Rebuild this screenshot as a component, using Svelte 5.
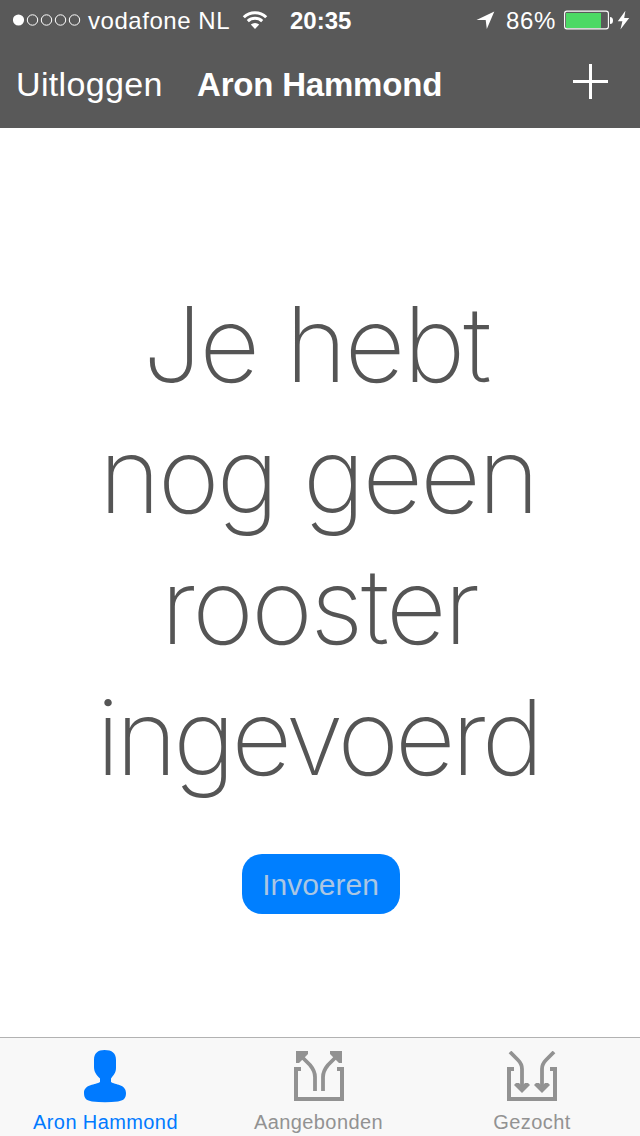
<script>
  const lines = [
    { text: 'Je hebt', spacing: -2.1, shift: -8 },
    { text: 'nog geen', spacing: -2.7, shift: -4 },
    { text: 'rooster', spacing: -2.5, shift: -2 },
    { text: 'ingevoerd', spacing: -4, shift: -4 }
  ];
  const dots = [1, 2, 3, 4];
</script>

<div class="screen">
  <header>
    <div class="status">
      <svg class="signal" width="68" height="12" viewBox="0 0 68 12">
        <circle cx="5.5" cy="6" r="5.6" fill="#fff" />
        {#each dots as d}
          <circle cx={5.5 + d * 14} cy="6" r="5.2" fill="none" stroke="#fff" stroke-width="1" />
        {/each}
      </svg>
      <span class="carrier">vodafone NL</span>
      <svg class="wifi" width="26" height="20" viewBox="0 0 26 20">
        <g fill="none" stroke="#fff" stroke-width="3">
          <path d="M1.8 7.2A16 16 0 0 1 24.2 7.2" />
          <path d="M5.8 11.2A10.5 10.5 0 0 1 20.2 11.2" />
        </g>
        <path d="M8.8 14.6A6 6 0 0 1 17.2 14.6L13 19Z" fill="#fff" />
      </svg>
      <span class="time">20:35</span>
      <svg class="location" width="19" height="19" viewBox="0 0 19 19">
        <path d="M18.3 .5 10.8 18 9.7 9.1 .5 8.9Z" fill="#fff" />
      </svg>
      <span class="percent">86%</span>
      <svg class="battery" width="50" height="20" viewBox="0 0 50 20">
        <rect x=".6" y="1.1" width="43.8" height="17.8" rx="2.3" fill="none" stroke="#fff" stroke-width="1.1" />
        <rect x="2" y="3" width="35" height="15" fill="#4cd964" />
        <path d="M46 7Q49 7 49 10.5T46 14Z" fill="#fff" />
      </svg>
      <svg class="bolt" width="13" height="20" viewBox="0 0 13 20">
        <path d="M8.4 .7 .8 11.2H5.4L3.4 19.4 12.2 8H7.2Z" fill="#fff" />
      </svg>
    </div>
    <nav>
      <span class="logout">Uitloggen</span>
      <h1>Aron Hammond</h1>
      <svg class="plus" width="35" height="35" viewBox="0 0 35 35">
        <path d="M17.5 0V35M0 17.5H35" stroke="#fff" stroke-width="3" />
      </svg>
    </nav>
  </header>

  <main>
    <p class="message">
      {#each lines as line}
        <span style="letter-spacing: {line.spacing}px; margin-left: {line.shift}px">{line.text}</span>
      {/each}
    </p>
    <button>Invoeren</button>
  </main>

  <footer>
    <div class="tab active">
      <svg width="42" height="53" viewBox="0 0 42 53">
        <path d="M20.5 0C28 0 32 3 32 10V18C32 23 29.5 25 27 28.5V32C31 35 42 34 42 43C42 49 39 50.5 34 51.5Q21 53 8 51.5C3 50.5 0 49 0 43C0 34 12 35 16 32V28.5C12.5 25 10 22 10 17V10C10 3 14 0 20.5 0Z" fill="#007aff" />
      </svg>
      <span>Aron Hammond</span>
    </div>
    <div class="tab">
      <svg width="50" height="51" viewBox="0 0 50 51">
        <g fill="none" stroke="#929292">
          <path d="M7 18H2V48H48V18H43" stroke-width="4" />
          <path d="M7 5 16 14Q21 20 21 26V40M43 5 34 14Q29 20 29 26V40" stroke-width="3.8" />
        </g>
        <path d="M2 0H14V3L5 12H2ZM48 0H36V3L45 12H48Z" fill="#929292" />
      </svg>
      <span>Aangebonden</span>
    </div>
    <div class="tab">
      <svg width="50" height="51" viewBox="0 0 50 51">
        <g fill="none" stroke="#929292">
          <path d="M7 18H2V48H48V18H43" stroke-width="4" />
          <path d="M3 1 11 9Q15 13 15 18V38M47 1 39 9Q35 13 35 18V38" stroke-width="3.8" />
        </g>
        <path d="M7 34 9 32H12L15 35 18 32H21L23 34 15 42ZM27 34 29 32H32L35 35 38 32H41L43 34 35 42Z" fill="#929292" />
      </svg>
      <span>Gezocht</span>
    </div>
  </footer>
</div>

<style>
  :global(body) {
    margin: 0;
    background: #fff;
  }
  .screen {
    width: 640px;
    height: 1136px;
    display: flex;
    flex-direction: column;
    overflow: hidden;
    background: #fff;
    font-family: "Liberation Sans", Arial, sans-serif;
    white-space: nowrap;
  }
  header {
    height: 128px;
    flex: none;
    background: #595959;
    color: #fff;
  }
  .status {
    height: 40px;
    display: flex;
    align-items: center;
    box-sizing: border-box;
    padding-left: 13px;
    font-size: 24px;
    line-height: 40px;
  }
  .status svg, .status span { flex: none; }
  .status span { padding-top: 2px; }
  .carrier {
    width: 143px;
    margin-left: 7px;
    letter-spacing: 0.55px;
  }
  .wifi { margin-left: 11px; }
  .time {
    width: 62px;
    margin-left: 22px;
    font-weight: bold;
  }
  .location { margin-left: 124px; }
  .percent {
    width: 50px;
    margin-left: 11px;
    letter-spacing: 0.7px;
  }
  .battery { margin-left: 8px; }
  .bolt { margin-left: 3px; }
  nav {
    height: 88px;
    display: flex;
    align-items: center;
    box-sizing: border-box;
    padding: 0 32px 0 16px;
    font-size: 34px;
  }
  .logout {
    width: 146px;
    letter-spacing: 0.35px;
  }
  h1 {
    margin: 0 0 0 35px;
    padding-top: 2px;
    font-size: 33px;
    font-weight: bold;
    letter-spacing: -0.2px;
  }
  .plus { margin: 0 0 6px auto; }
  main {
    flex: 1;
    display: flex;
    flex-direction: column;
    align-items: center;
    padding-top: 150px;
  }
  .message {
    margin: 0;
    display: flex;
    flex-direction: column;
    align-items: center;
    font-family: Inter, "Liberation Sans", sans-serif;
    font-size: 105px;
    font-weight: 200;
    line-height: 131px;
    color: #555;
  }
  button {
    width: 158px;
    height: 60px;
    margin: 52px 0 0 2px;
    padding: 1px 1px 0 0;
    border: 0;
    border-radius: 20px;
    background: #007fff;
    color: #aac6e3;
    font: 30px/60px "Liberation Sans", Arial, sans-serif;
    letter-spacing: 0;
  }
  footer {
    height: 99px;
    flex: none;
    box-sizing: border-box;
    border-top: 1px solid #b2b2b2;
    background: #f8f8f8;
    display: grid;
    grid-template-columns: 210px 217px 210px;
    font-size: 20px;
    color: #929292;
  }
  .tab {
    display: flex;
    flex-direction: column;
    align-items: center;
    justify-content: space-between;
    padding-top: 13px;
    letter-spacing: 0.4px;
    line-height: 28px;
  }
  .active {
    padding-top: 12px;
    color: #007aff;
  }
  .active span { margin-left: 1px; }
</style>
